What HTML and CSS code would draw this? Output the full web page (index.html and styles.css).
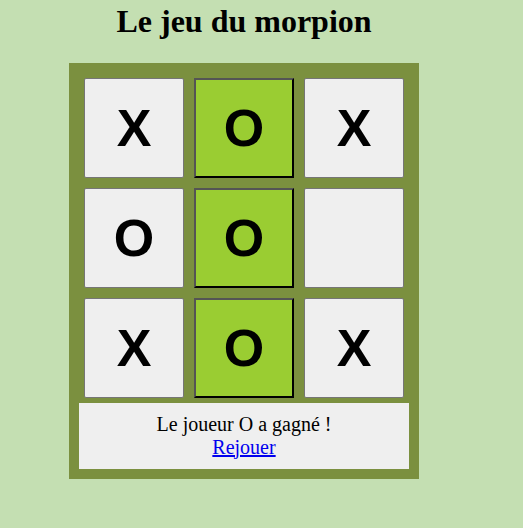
FILE: index.html
```html
<!DOCTYPE html>
<html lang="fr">
<head>
<meta charset="utf-8">
<title>Le jeu du morpion</title>
<link rel="stylesheet" href="styles.css">
</head>
<body>
<main class="page">
  <h1 class="title">Le jeu du morpion</h1>
  <section class="board">
    <div class="cells">
      <button class="cell">X</button>
      <button class="cell win">O</button>
      <button class="cell">X</button>
      <button class="cell">O</button>
      <button class="cell win">O</button>
      <button class="cell"></button>
      <button class="cell">X</button>
      <button class="cell win">O</button>
      <button class="cell">X</button>
    </div>
    <div class="message">
      <div>Le joueur O a gagné !</div>
      <a class="replay" href="#">Rejouer</a>
    </div>
  </section>
</main>
</body>
</html>
```
FILE: styles.css
```css
html, body {
  margin: 0;
  background: #c4dfb2;
}

.page {
  width: 488px;
  display: flex;
  flex-direction: column;
  align-items: center;
  font-family: "Liberation Serif", "Times New Roman", serif;
  color: #000;
}

.title {
  margin: 3px 0 23px;
  font-size: 32px;
  font-weight: bold;
  text-align: center;
}

.board {
  width: 330px;
  padding: 10px;
  background: #7b903f;
}

.cells {
  display: grid;
  grid-template-columns: repeat(3, 100px);
  grid-auto-rows: 100px;
  gap: 10px;
  padding: 5px;
}

.cell {
  box-sizing: border-box;
  width: 100px;
  height: 100px;
  margin: 0;
  padding: 0;
  background: #efefef;
  border: 1px solid #767676;
  border-radius: 2px;
  font-family: "Liberation Sans", Arial, sans-serif;
  font-size: 52px;
  font-weight: bold;
  color: #000;
  line-height: normal;
  appearance: none;
}

.cell.win {
  background: #9acd32;
  border: 2px solid;
  border-color: #545454 #000 #000 #545454;
  border-radius: 0;
}

.message {
  box-sizing: border-box;
  height: 66px;
  background: #efefef;
  padding: 10px 0;
  text-align: center;
  font-size: 20px;
  line-height: 22.5px;
}

.replay {
  color: #0000ee;
  text-decoration: underline;
}
```
